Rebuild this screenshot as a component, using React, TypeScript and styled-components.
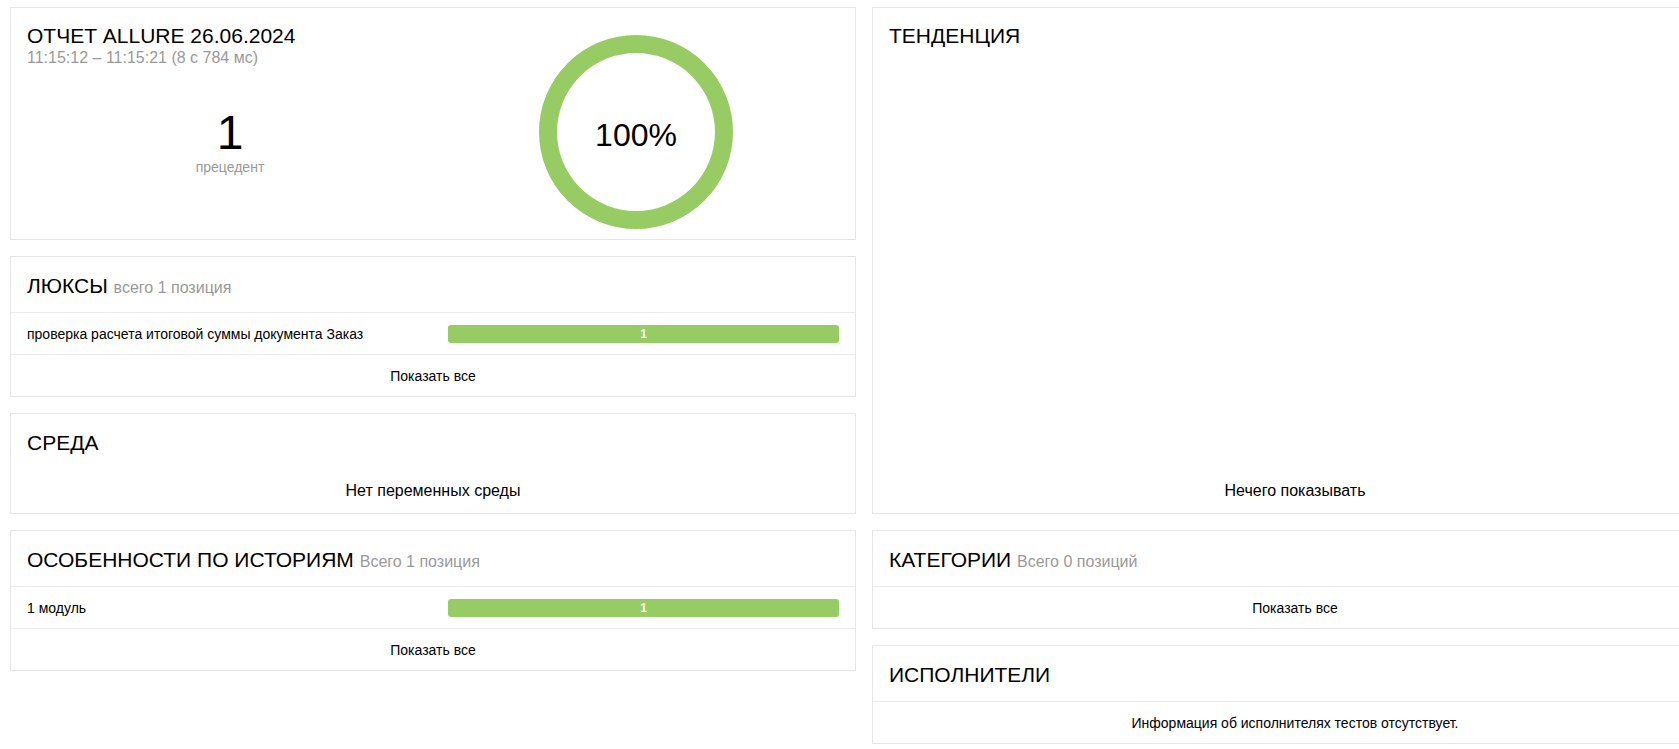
import React from "react";
import styled, { createGlobalStyle } from "styled-components";

const GlobalStyle = createGlobalStyle`
  html, body {
    margin: 0;
    padding: 0;
    background: #fff;
    overflow: hidden;
  }
  body {
    font-family: "Liberation Sans", Arial, sans-serif;
    color: #000;
  }
  * { box-sizing: border-box; }
`;

const Page = styled.div`
  display: grid;
  grid-template-columns: 846px 846px;
  column-gap: 16px;
  align-items: start;
  padding: 7px 0 0 10px;
  width: max-content;
`;

const Column = styled.div`
  display: flex;
  flex-direction: column;
  gap: 16px;
`;

const Widget = styled.section<{ $height?: number }>`
  background: #fff;
  border: 1px solid #e5e5e5;
  display: flex;
  flex-direction: column;
  ${(p) => (p.$height ? `height: ${p.$height}px;` : "")}
`;

const SummaryBody = styled.div`
  display: grid;
  grid-template-columns: 1fr 1fr;
  padding: 16px 16px 0;
`;

const SummaryInfo = styled.div`
  display: flex;
  flex-direction: column;
`;

const Title = styled.h2`
  margin: 0;
  font-size: 21px;
  line-height: 24px;
  font-weight: normal;
  text-transform: uppercase;
`;

const Subtitle = styled.div`
  font-size: 16px;
  line-height: 20px;
  color: #999;
`;

const Splash = styled.div`
  margin-top: 41px;
  text-align: center;
`;

const SplashNumber = styled.div`
  font-size: 48px;
  line-height: 48px;
`;

const SplashLabel = styled.div`
  font-size: 14px;
  line-height: 20px;
  color: #999;
`;

const ChartBox = styled.div`
  height: 215px;
  display: flex;
  align-items: center;
  justify-content: center;
`;

const Header = styled.div<{ $top?: number }>`
  height: ${(p) => (p.$top !== undefined ? p.$top + 24 : 55)}px;
  padding: ${(p) => p.$top ?? 17}px 16px 0;
  font-size: 21px;
  line-height: 24px;
  white-space: nowrap;
`;

const HeaderCount = styled.span`
  font-size: 16px;
  line-height: 16px;
  color: #999;
`;

const Row = styled.div`
  border-top: 1px solid #ececec;
  height: 42px;
  padding: 0 16px;
  display: grid;
  grid-template-columns: 421px 1fr;
  align-items: center;
  font-size: 14px;
`;

const RowName = styled.div`
  white-space: nowrap;
  overflow: hidden;
  text-overflow: ellipsis;
`;

const Bar = styled.div`
  height: 18px;
  margin-top: 1px;
  border-radius: 3px;
  background: #97cc64;
  color: #fff;
  font-size: 12px;
  font-weight: bold;
  line-height: 18px;
  text-align: center;
`;

const CenterRow = styled.div<{ $divider?: boolean; $h?: number; $size?: number }>`
  ${(p) => (p.$divider ? "border-top: 1px solid #ececec;" : "")}
  height: ${(p) => p.$h ?? 42}px;
  display: flex;
  align-items: center;
  justify-content: center;
  font-size: ${(p) => p.$size ?? 14}px;
`;

const Filler = styled.div`
  flex: 1;
`;

const Donut: React.FC<{ percent: string }> = ({ percent }) => (
  <svg width="200" height="200" viewBox="0 0 200 200">
    <circle cx="100" cy="100" r="88" fill="none" stroke="#97cc64" strokeWidth="18" />
    <text
      x="100"
      y="113.5"
      textAnchor="middle"
      fontSize="32"
      fontFamily="'Liberation Sans', Arial, sans-serif"
      fill="#000"
    >
      {percent}
    </text>
  </svg>
);

type Item = { name: string; count: number };

const ListWidget: React.FC<{ title: string; count: string; items: Item[] }> = ({
  title,
  count,
  items,
}) => (
  <Widget>
    <Header>
      {title} <HeaderCount>{count}</HeaderCount>
    </Header>
    {items.map((it) => (
      <Row key={it.name}>
        <RowName>{it.name}</RowName>
        <Bar>{it.count}</Bar>
      </Row>
    ))}
    <CenterRow $divider>Показать все</CenterRow>
  </Widget>
);

export default function App() {
  return (
    <>
      <GlobalStyle />
      <Page>
        <Column>
          <Widget>
            <SummaryBody>
              <SummaryInfo>
                <Title>Отчет Allure 26.06.2024</Title>
                <Subtitle>11:15:12 – 11:15:21 (8 с 784 мс)</Subtitle>
                <Splash>
                  <SplashNumber>1</SplashNumber>
                  <SplashLabel>прецедент</SplashLabel>
                </Splash>
              </SummaryInfo>
              <ChartBox>
                <Donut percent="100%" />
              </ChartBox>
            </SummaryBody>
          </Widget>

          <ListWidget
            title="ЛЮКСЫ"
            count="всего 1 позиция"
            items={[{ name: "проверка расчета итоговой суммы документа Заказ", count: 1 }]}
          />

          <Widget>
            <Header>СРЕДА</Header>
            <CenterRow $h={44} $size={16}>Нет переменных среды</CenterRow>
          </Widget>

          <ListWidget
            title="ОСОБЕННОСТИ ПО ИСТОРИЯМ"
            count="Всего 1 позиция"
            items={[{ name: "1 модуль", count: 1 }]}
          />
        </Column>

        <Column>
          <Widget $height={507}>
            <Header $top={16}>ТЕНДЕНЦИЯ</Header>
            <Filler />
            <CenterRow $h={44} $size={16}>Нечего показывать</CenterRow>
          </Widget>

          <Widget>
            <Header>
              КАТЕГОРИИ <HeaderCount>Всего 0 позиций</HeaderCount>
            </Header>
            <CenterRow $divider>Показать все</CenterRow>
          </Widget>

          <Widget>
            <Header>ИСПОЛНИТЕЛИ</Header>
            <CenterRow $divider>Информация об исполнителях тестов отсутствует.</CenterRow>
          </Widget>
        </Column>
      </Page>
    </>
  );
}
